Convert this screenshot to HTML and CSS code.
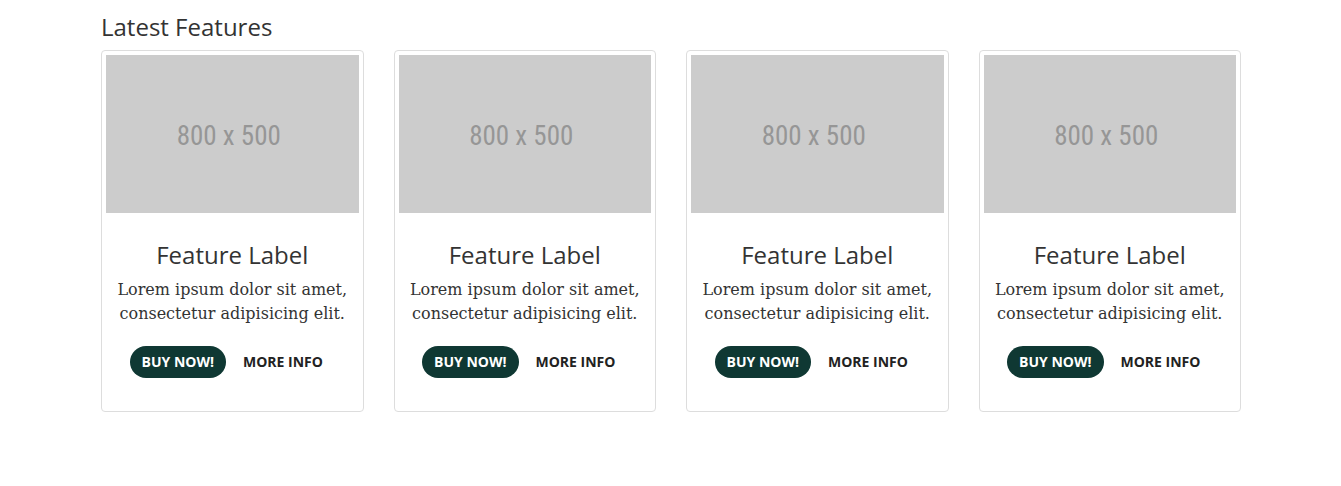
FILE: index.html
```html
<!DOCTYPE html>
<html lang="en">
<head>
<meta charset="utf-8">
<meta name="viewport" content="width=device-width, initial-scale=1">
<title>Latest Features</title>
<link rel="stylesheet" href="styles.css">
</head>
<body>
<main class="container">
<h3 class="section-title">Latest Features</h3>
<div class="features">
<article class="card">
<div class="placeholder" role="img" aria-label="800 x 500"><span class="size">800 x 500</span></div>
<div class="caption"><h3 class="label">Feature Label</h3><p class="text">Lorem ipsum dolor sit amet, consectetur adipisicing elit.</p>
<div class="actions"><a class="btn btn-primary" href="#">Buy Now!</a><a class="btn" href="#">More Info</a></div></div>
</article>
<article class="card">
<div class="placeholder" role="img" aria-label="800 x 500"><span class="size">800 x 500</span></div>
<div class="caption"><h3 class="label">Feature Label</h3><p class="text">Lorem ipsum dolor sit amet, consectetur adipisicing elit.</p>
<div class="actions"><a class="btn btn-primary" href="#">Buy Now!</a><a class="btn" href="#">More Info</a></div></div>
</article>
<article class="card">
<div class="placeholder" role="img" aria-label="800 x 500"><span class="size">800 x 500</span></div>
<div class="caption"><h3 class="label">Feature Label</h3><p class="text">Lorem ipsum dolor sit amet, consectetur adipisicing elit.</p>
<div class="actions"><a class="btn btn-primary" href="#">Buy Now!</a><a class="btn" href="#">More Info</a></div></div>
</article>
<article class="card">
<div class="placeholder" role="img" aria-label="800 x 500"><span class="size">800 x 500</span></div>
<div class="caption"><h3 class="label">Feature Label</h3><p class="text">Lorem ipsum dolor sit amet, consectetur adipisicing elit.</p>
<div class="actions"><a class="btn btn-primary" href="#">Buy Now!</a><a class="btn" href="#">More Info</a></div></div>
</article>
</div>
</main>
</body>
</html>
```
FILE: styles.css
```css
* { box-sizing: border-box; }
body { margin: 0; background: #fff; color: #333; font-family: "Open Sans", sans-serif; }
.container { max-width: 1169px; margin: 0 auto; padding: 14px 14px 14px 15px; }
.section-title, .label { margin: 0; font-size: 24px; line-height: 26px; font-weight: 400; }
.section-title { margin-bottom: 10px; }
.features { display: grid; grid-template-columns: repeat(4, 1fr); gap: 30px; }
.card { padding: 4px; border: 1px solid #ddd; border-radius: 4px; }
.placeholder { display: flex; align-items: center; justify-content: center; aspect-ratio: 8 / 5; padding: 4px 7px 0 0; background: #ccc; color: #969696; }
.size { font-family: "Roboto Condensed", "Liberation Sans", sans-serif; font-size: 27px; line-height: 32px; }
.caption { padding: 29px 8px; text-align: center; }
.text { margin: 10px 0 20px; font-family: "DejaVu Serif", serif; font-size: 16px; line-height: 24px; }
.actions { display: flex; justify-content: center; gap: 5px; }
.btn { padding: 7px 12px; border-radius: 16px; color: #222; font-size: 14px; line-height: 18px; font-weight: 700; text-transform: uppercase; text-decoration: none; white-space: nowrap; }
.btn-primary { background: #0f3833; color: #fff; }
```
